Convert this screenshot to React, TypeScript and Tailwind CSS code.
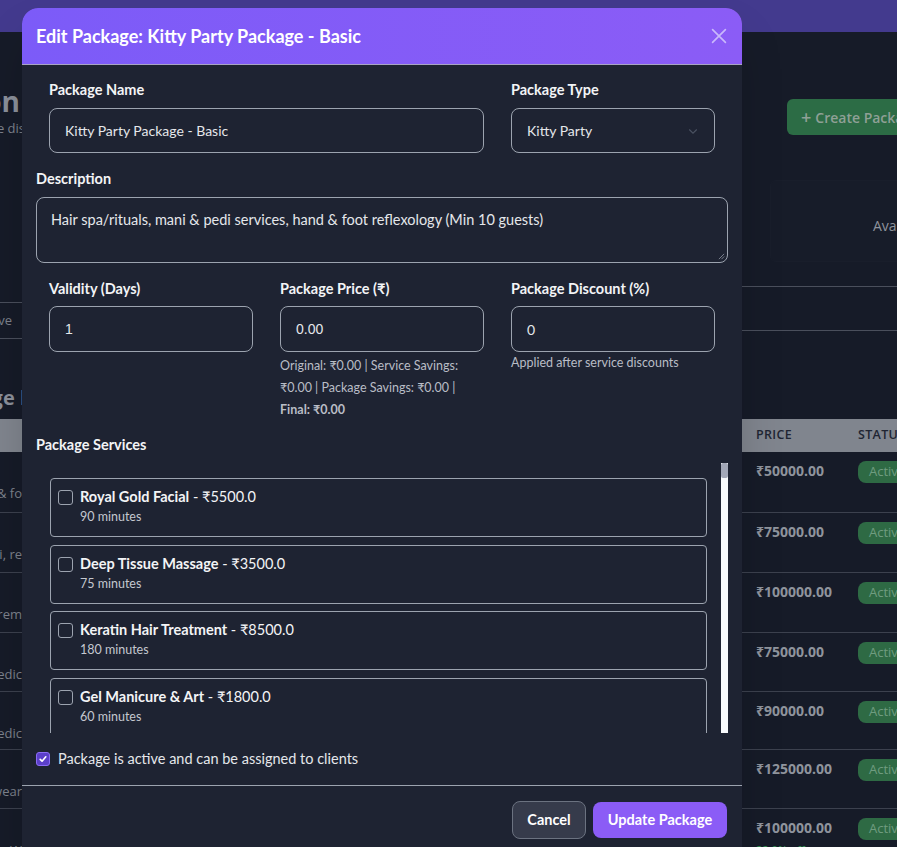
import React from "react";

const font = { fontFamily: "Lato, 'Noto Sans', sans-serif" };

function Check() {
  return (
    <svg viewBox="0 0 16 16" className="w-[10px] h-[10px]" fill="none" stroke="white" strokeWidth="2.6" strokeLinecap="round" strokeLinejoin="round">
      <path d="M3.5 8.5l3 3 6-7" />
    </svg>
  );
}

const services = [
  { name: "Royal Gold Facial", price: "₹5500.0", mins: "90 minutes" },
  { name: "Deep Tissue Massage", price: "₹3500.0", mins: "75 minutes" },
  { name: "Keratin Hair Treatment", price: "₹8500.0", mins: "180 minutes" },
  { name: "Gel Manicure & Art", price: "₹1800.0", mins: "60 minutes" },
];

const rows = [
  { h: "h-[61px]", left: "hand & fo", price: "₹50000.00" },
  { h: "h-[60px]", left: "mani, pedi, re", price: "₹75000.00" },
  { h: "h-[60px]", left: "Prem", price: "₹100000.00" },
  { h: "h-[59px]", left: "Pedic", price: "₹75000.00" },
  { h: "h-[58px]", left: "Pedic", price: "₹90000.00" },
  { h: "h-[59px]", left: "Bridal wear", price: "₹125000.00" },
  { h: "h-[59px]", left: "W", price: "₹100000.00", off: "22.0% off" },
];

const label = "text-[14.5px] font-bold leading-[18px] text-[#f3f4f6]";

export default function App() {
  return (
    <div className="relative w-[897px] h-[847px] overflow-hidden bg-[#161b28]" style={{ fontFamily: "'Open Sans', 'Noto Sans', sans-serif" }}>
      {/* Background page (dimmed) */}
      <div className="h-[32px] bg-[#433a8e]" />
      <div className="flex h-[387px]">
        {/* left strip */}
        <div className="w-[22px] shrink-0 overflow-hidden flex flex-col">
          <div className="mt-[52px] flex justify-end whitespace-nowrap text-[28px] font-bold leading-[34px] text-[#8b909a] pr-[2px]">Package Collection</div>
          <div className="mt-[1px] flex justify-end whitespace-nowrap text-[13px] leading-[18px] text-[#7d828c] -mr-[3px]">Manage service packages with price dis</div>
          <div className="mt-[165px] h-[37px] border-y border-[#4a4f5c] flex items-center justify-end whitespace-nowrap text-[13px] text-[#7d828c] pr-[10px]">Active</div>
          <div className="mt-[47px] flex justify-end whitespace-nowrap text-[20px] font-bold leading-[24px] text-[#8b909a] -mr-[4px]">Package l</div>
        </div>
        <div className="w-[720px] shrink-0" />
        {/* right strip */}
        <div className="flex-1 overflow-hidden flex flex-col">
          <div className="mt-[67px] ml-[45px] h-[36px] w-[140px] shrink-0 rounded-md bg-[#2c6c45] flex items-center pl-[14px] gap-[4px] whitespace-nowrap text-[14px] font-semibold text-[#8fa096]">
            <span className="text-[18px] leading-none">+</span> Create Package
          </div>
          <div className="mt-[45px] ml-[28px] h-[82px] w-[200px] shrink-0 rounded-md bg-[#171c29] border border-[#191e2b] flex items-end pb-[25px] pl-[102px] whitespace-nowrap text-[14px] text-[#8e939c]">
            Available
          </div>
          <div className="mt-[24px] h-[45px] shrink-0 border-y border-[#4a4f5c]" />
        </div>
      </div>
      {/* table */}
      <div className="bg-[#80858e] h-[33px] flex items-center text-[12.5px] font-semibold tracking-wide text-[#1f2533]">
        <div className="w-[756px] shrink-0" />
        <div className="w-[102px] shrink-0">PRICE</div>
        <div className="whitespace-nowrap">STATUS</div>
      </div>
      {rows.map((r, i) => (
        <div key={i} className={`${r.h} flex border-b border-[#3c414e]`}>
          <div className="w-[22px] shrink-0 overflow-hidden pt-[8px] flex flex-col items-end">
            <div className="whitespace-nowrap text-[13px] leading-[22px] text-transparent">x</div>
            <div className="whitespace-nowrap text-[13px] leading-[22px] text-[#7d828c]">{r.left}</div>
          </div>
          <div className="w-[734px] shrink-0" />
          <div className="w-[102px] shrink-0 pt-[10px] text-[14px] font-bold leading-[18px] text-[#8f949d] whitespace-nowrap">
            {r.price}
            {r.off && <div className="mt-[4px] text-[11px] text-[#2f8a4f] font-semibold">{r.off}</div>}
          </div>
          <div className="pt-[9px] shrink-0">
            <div className="h-[22px] rounded-lg bg-[#2e6a44] px-[11px] flex items-center text-[13px] text-[#6f9c80]">Active</div>
          </div>
        </div>
      ))}

      {/* Modal overlay */}
      <div className="absolute left-[22px] top-[8px] w-[720px] h-[860px] rounded-2xl overflow-hidden bg-[#1e2332] shadow-2xl" style={font}>
        <div className="h-[57px] bg-gradient-to-r from-[#7c5bf8] to-[#8b5cf6] border-b border-[#a9a4c4] flex items-center justify-between px-[14px]">
          <div className="text-[18px] font-bold text-white">Edit Package: Kitty Party Package - Basic</div>
          <svg viewBox="0 0 24 24" className="w-[22px] h-[22px] mr-[-2px]" fill="none" stroke="#c9b8fb" strokeWidth="1.8" strokeLinecap="round">
            <path d="M5 5l14 14M19 5L5 19" />
          </svg>
        </div>

        <div className="px-[14px] pt-[16px]">
          <div className="mx-[13px] grid grid-cols-3 gap-x-[27px]">
            <div className="col-span-2">
              <div className={`${label} mb-[9px]`}>Package Name</div>
              <div className="h-[45px] rounded-lg border border-[#9ca3af] flex items-center px-[15px] text-[14px] text-[#e5e7eb]">Kitty Party Package - Basic</div>
            </div>
            <div>
              <div className={`${label} mb-[9px]`}>Package Type</div>
              <div className="h-[45px] rounded-lg border border-[#9ca3af] flex items-center justify-between px-[15px] text-[14px] text-[#e5e7eb]">
                <span>Kitty Party</span>
                <svg viewBox="0 0 16 16" className="w-[12px] h-[12px]" fill="none" stroke="#4b5262" strokeWidth="1.5"><path d="M3 6l5 5 5-5" /></svg>
              </div>
            </div>
          </div>

          <div className={`mt-[17px] ${label} mb-[9px]`}>Description</div>
          <div className="relative h-[66px] rounded-lg border border-[#9ca3af] px-[14px] pt-[12px] text-[14.5px] leading-[20px] text-[#e5e7eb]">
            Hair spa/rituals, mani &amp; pedi services, hand &amp; foot reflexology (Min 10 guests)
            <svg viewBox="0 0 8 8" className="absolute right-[2px] bottom-[2px] w-[7px] h-[7px]" stroke="#9ca3af" strokeWidth="0.8"><path d="M1 7L7 1M4 7L7 4" /></svg>
          </div>

          <div className="mt-[17px] mx-[13px] grid grid-cols-3 gap-x-[27px]">
            <div>
              <div className={`${label} mb-[8px]`}>Validity (Days)</div>
              <div className="h-[46px] rounded-lg border border-[#9ca3af] flex items-center px-[15px] text-[14px] text-[#e5e7eb]" style={{ fontFamily: "'Liberation Sans', Arial, sans-serif" }}>1</div>
            </div>
            <div>
              <div className={`${label} mb-[8px]`}>Package Price (₹)</div>
              <div className="h-[46px] rounded-lg border border-[#9ca3af] flex items-center px-[15px] text-[14px] text-[#e5e7eb]" style={{ fontFamily: "'Liberation Sans', Arial, sans-serif" }}>0.00</div>
              <div className="mt-[3px] text-[12.5px] leading-[22px] text-[#b9bdc6]">
                Original: ₹0.00 | Service Savings: ₹0.00 | Package Savings: ₹0.00 | <span className="font-bold">Final: ₹0.00</span>
              </div>
            </div>
            <div>
              <div className={`${label} mb-[8px]`}>Package Discount (%)</div>
              <div className="h-[46px] rounded-lg border border-[#9ca3af] flex items-center px-[15px] text-[14px] text-[#e5e7eb]">0</div>
              <div className="mt-[1px] text-[12.5px] leading-[20px] text-[#b9bdc6]">Applied after service discounts</div>
            </div>
          </div>

          <div className={`mt-[15px] ${label} mb-[9px]`}>Package Services</div>
          <div className="h-[270px] flex">
            <div className="flex-1 overflow-hidden px-[14px] pt-[15px] flex flex-col gap-[7.5px]">
              {services.map((s) => (
                <div key={s.name} className="shrink-0 h-[59px] rounded-[4px] border border-[#9ca3af] pl-[7px] pt-[9px] flex gap-[7px]">
                  <div className="mt-[2px] w-[15px] h-[15px] rounded-[3px] border border-[#9ca3af] bg-[#1e2332]" />
                  <div>
                    <div className="text-[14.5px] leading-[18px] text-[#f3f4f6]">
                      <span className="font-bold">{s.name}</span> - {s.price}
                    </div>
                    <div className="mt-[2px] text-[12.5px] leading-[18px] text-[#c4c8d0]">{s.mins}</div>
                  </div>
                </div>
              ))}
            </div>
            <div className="w-[7px] bg-[#f8fafc]">
              <div className="h-[15px] rounded-[2px] bg-[#a3a8b8]" />
            </div>
          </div>

          <div className="mt-[17px] flex items-center gap-[8px]">
            <div className="w-[14px] h-[14px] rounded-[3px] bg-[#5b3fc9] border border-[#8b6cf6] flex items-center justify-center">
              <Check />
            </div>
            <div className="text-[14.5px] leading-[18px] text-[#e5e7eb]">Package is active and can be assigned to clients</div>
          </div>
        </div>

        <div className="mt-[17px] border-t border-[#9ca3af] flex justify-end gap-[7px] pt-[15px] pr-[15px]">
          <div className="w-[74px] h-[38px] rounded-lg bg-[#363b4b] border border-[#6b7280] flex items-center justify-center text-[14.5px] font-bold text-white">Cancel</div>
          <div className="mt-[1px] w-[134px] h-[36px] rounded-lg bg-[#8b5cf6] flex items-center justify-center text-[14.5px] font-bold text-white">Update Package</div>
        </div>
      </div>
    </div>
  );
}
